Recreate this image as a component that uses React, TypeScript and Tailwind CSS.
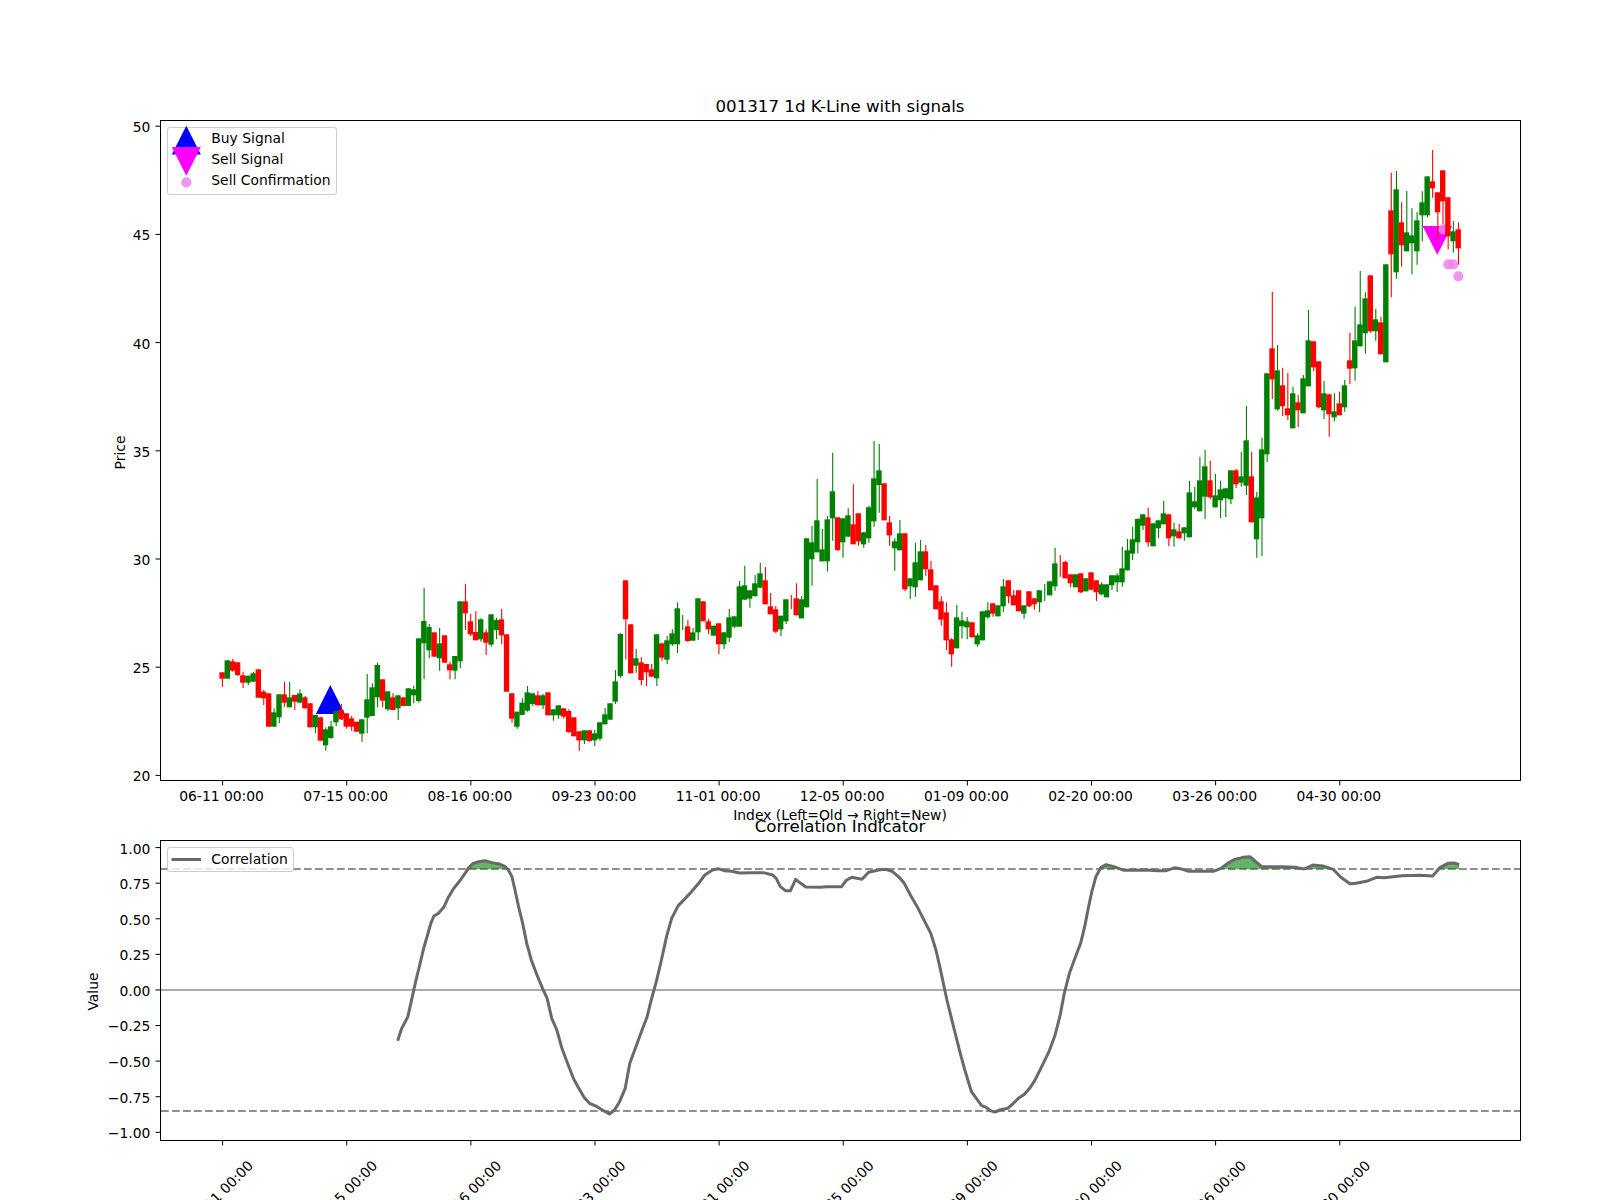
import React from "react";

type Candle = { c: string; t: number; b: number; wt: number; wb: number };

// Each segment: pixel offset of the reading + "colour top bottom wickTop wickBottom" (in thirds of a pixel).
const SEGMENTS: [number, string][] = [
  [620, `R 157 176 157 200,G 121 176 121 176,R 124 152 116 155,R 127 165 127 168,R 166 188 155 204,G 167 188 167 195,G 160 185 155 185,R 148 233 148 233,R 215 235 210 255,R 220 320 220 320,G 277 320 265 320,G 223 292 223 310,R 223 248 185 260,G 232 262 185 262,R 225 245 225 270,G 220 248 208 248,R 232 265 228 265,R 250 322 250 322,G 285 322 285 340,R 292 362 292 362,G 328 376 322 392,G 319 354 303 356,G 273 307 273 318,R 270 298 252 300,R 280 320 280 326,R 295 320 288 333,R 305 335 305 335,G 298 341 298 366,G 238 293 162 340,G 202 288 190 288,G 135 232 128 262,R 178 242 178 262,G 214 268 214 272,R 232 270 220 270,G 226 265 226 300,R 232 258 232 258,G 205 258 205 258,G 208 226 197 250,G 55 243 55 248,G 3 70 -97 178,G 21 91 12 115,R 37 110 37 110,G 70 115 24 152,R 46 128 46 128,R 133 151 125 178,G 108 152 108 178,G -56 124 -56 145,R -56 -20 -108 30,R 4 43 -18 48,R 36 61 -26 61,G -2 58 -5 65,R 37 68 28 105,G -17 74 -17 80,G 0 30 -7 57,R -2 46 -33 72,R 43 215 43 215,R 220 296 220 308,G 275 320 275 326,G 248 285 235 285,G 217 272 198 275`],
  [500, `G 580 612 580 618,R 586 616 573 616,G 586 616 582 627,R 577 646 577 646,G 628 646 628 662,G 616 646 616 656,R 625 650 625 656,R 633 696 628 699,R 652 709 652 709,R 694 721 694 752,G 691 721 691 732,R 691 723 691 725,G 700 721 690 738,G 667 716 667 722,G 643 673 624 673,G 610 659 610 659,G 544 605 510 612,G 402 528 400 534,R 241 358 241 478,R 373 520 373 520,G 475 497 447 518,R 487 540 472 556,R 492 517 492 558,R 508 530 492 530,G 403 535 403 558,R 430 473 430 482,G 421 479 408 492,G 400 433 388 438,G 325 433 307 459,G 378 378 345 390,R 379 423 360 426,G 397 422 384 422,G 295 397 295 420,R 304 364 304 364,R 364 388 356 402,G 377 407 377 407,R 370 433 370 462,G 397 433 397 447,G 352 413 327 426,G 349 380 349 384,G 259 380 243 380,G 256 299 197 299,G 271 296 271 323,G 250 288 225 291,G 220 263 188 263,R 241 313 201 313,R 319 343 279 343,R 328 395 318 399,G 347 388 347 408,G 298 364 298 372,R 306 306 285 327,R 295 346 250 346`],
  [430, `G 508 565 498 565,G 325 532 325 532,G 337 388 288 467,G 271 367 147 367,G 358 394 297 394,G 268 394 258 425,G 184 265 68 332,R 262 360 262 363,G 265 337 265 383,G 256 320 235 320,R 283 343 163 343,R 250 334 250 347,G 307 343 307 353,G 232 325 228 338,G 145 274 33 290,G 121 165 42 248,R 160 271 160 271,R 277 316 258 347,G 334 355 325 422,G 310 361 270 361,R 310 478 310 484,G 445 469 445 508,G 397 472 338 500,G 364 451 330 451,R 364 418 345 437,R 418 481 393 481,R 466 538 466 538,R 514 569 499 587,R 547 631 517 661,R 628 673 625 710,G 562 655 525 655,G 571 589 545 626,G 574 592 561 628,R 577 622 577 622,G 616 643 610 650,G 544 631 544 631,G 541 562 517 566,R 520 551 520 560,G 526 559 526 559,G 469 529 447 547,R 451 499 451 520,R 496 526 480 526,R 481 544 481 544,G 526 551 526 566,R 484 529 484 532,R 505 523 505 539,G 481 517 481 546,G 488 488 462 513,G 454 496 454 496,G 400 469 353 482,R 408 408 375 440,R 396 445 392 445,R 433 460 433 472,G 433 472 433 472,R 430 487 430 490,G 445 484 445 484,R 427 479 427 481,R 451 487 451 513,G 463 493 457 496,G 463 502 463 502,G 436 466 436 480,G 436 457 430 486,G 415 457 350 470,G 361 421 327 421`],
  [270, `G 808 851 770 870,G 747 817 745 850,G 733 767 733 780,R 742 817 713 830,G 760 829 760 829,G 751 775 751 805,G 730 763 692 763,R 733 805 733 828,G 778 799 758 830,R 784 805 762 805,G 772 790 772 812,G 667 802 632 802,G 694 712 650 717,G 631 724 560 724,G 589 680 540 747,R 631 682 572 687,G 676 712 612 712,G 658 691 632 744,G 655 685 655 741,G 601 688 601 702,R 601 643 597 654,G 619 638 545 650,G 511 647 408 675,R 619 757 545 757,G 682 808 666 863,G 538 745 503 858,G 310 553 310 576,R 235 328 66 387,G 301 418 225 422,R 346 409 293 438,R 415 436 309 450,G 370 475 350 475,R 397 421 375 471,G 325 430 315 430,G 211 349 120 349,R 214 292 214 303,R 274 412 274 415,G 370 421 333 447,R 373 433 373 500,G 424 442 370 454,R 400 436 365 436`],
  [130, `G 766 832 750 845,R 691 716 608 762,G 631 715 530 752,G 583 649 423 649,G 505 610 487 671,R 436 604 436 608,G 568 604 537 632,R 577 673 560 673,G 403 697 403 697,R 241 373 128 502,G 178 427 123 446,R 277 346 217 410,G 307 364 183 364,G 316 340 235 433,G 271 364 246 404,G 217 256 184 334,G 139 256 139 262,R 154 175 60 203,R 187 247 187 328,R 121 214 121 283,R 202 319 202 358,G 304 334 273 368,R 298 355 277 404`],
];

const candles: Candle[] = SEGMENTS.flatMap(([off, s]) =>
  s.split(",").map((row) => {
    const [c, t, b, wt, wb] = row.split(" ");
    const y = (v: string) => off + Number(v) / 3;
    return { c: c === "R" ? "#ff0000" : "#008000", t: y(t), b: y(b), wt: y(wt), wb: y(wb) };
  })
);

const X0 = 222;
const STEP = 5.172;
const TICK0 = 222.6;

const priceTicks: [string, number][] = [
  ["50", 126.2],
  ["45", 234.4],
  ["40", 342.6],
  ["35", 450.8],
  ["30", 559],
  ["25", 667.2],
  ["20", 775.4],
];

const valueTicks = ["1.00", "0.75", "0.50", "0.25", "0.00", "\u22120.25", "\u22120.50", "\u22120.75", "\u22121.00"];
const dates = ["06-11", "07-15", "08-16", "09-23", "11-01", "12-05", "01-09", "02-20", "03-26", "04-30"];

const A = `505,842 513,805 525,770 533,715 541,660 549,610 556,565 563,528 570,490 576,468 585,460 596,440 605,410 615,385 628,360 637,340 645,322 653,310 664,305 676,302 690,308 705,312 716,320 722,330 729,350 735,390 742,440 750,490 758,550 767,600 778,645 789,685 798,715 807,775 817,810 827,865 838,910 850,957 860,985 871,1013 881,1030 896,1040 906,1050 920,1062 930,1050 940,1025 951,985 960,910 972,860 984,810 994,770 1002,720 1012,665 1022,600 1032,530 1042,475 1055,437 1067,418 1080,397 1095,370 1107,345 1122,330 1133,326 1145,332 1160,334 1175,339 1200,338 1222,338 1240,345 1247,355 1255,380 1265,392 1275,392 1285,358 1295,370 1305,381 1335,382 1345,380 1375,380 1385,360 1395,352 1415,358 1428,337 1450,329 1462,328 1475,335 1488,352 1498,370 1510,405 1525,445 1540,490 1550,520 1560,570`;
const B = `274,620 281,670 288,720 296,770 305,825 315,885 323,930 336,995 347,1018 356,1037 365,1042 373,1052 382,1056 392,1050 407,1045 417,1032 428,1015 440,1003 450,985 460,962 472,925 488,875 500,825 510,765 518,700 528,640 540,590 550,550 558,500 565,445 572,395 580,350 590,322 600,314 615,320 635,331 680,330 700,332 718,332 735,323 750,328 762,334 810,334 825,325 838,310 852,298 868,292 882,290 895,307 905,320 945,320 970,322 988,327 1005,315 1025,318 1045,328 1060,352 1078,371 1090,370 1110,364 1130,352 1145,353 1180,347 1215,346 1240,348 1255,322 1270,310 1282,309 1292,314`;

const parse = (s: string, ox: number) =>
  s.split(" ").map((p) => {
    const [x, y] = p.split(",").map(Number);
    return [ox + x / 1.96, 760 + y / 3] as [number, number];
  });

const curve = [...parse(A, 140), ...parse(B, 800)];
const curvePts = curve.map((p) => p.join(",")).join(" ");
const first = curve[0];
const last = curve[curve.length - 1];
const areaUp = `${curvePts} ${last[0]},869 ${first[0]},869`;
const areaDown = `${curvePts} ${last[0]},1111 ${first[0]},1111`;

function Frame({ x1, y1, x2, y2 }: { x1: number; y1: number; x2: number; y2: number }) {
  return <rect x={x1} y={y1} width={x2 - x1} height={y2 - y1} fill="none" stroke="#000" strokeWidth={1} shapeRendering="crispEdges" />;
}

export default function App() {
  return (
    <div className="w-[1600px] h-[1200px] bg-white overflow-hidden text-black [font-family:'DejaVu_Sans',sans-serif]">
      <div className="h-[120px] pl-[160px] w-[1520px] flex items-end justify-center pb-[1.4px] text-[16.67px]">001317 1d K-Line with signals</div>

      <div className="relative ml-[160px] w-[1360px] h-[660px]">
        <svg className="block overflow-visible text-[13.89px]" width={1360} height={660} viewBox="160 120 1360 660">
          {/* signal markers sit under the candles */}
          <polygon points="330.3,685 344.8,714 315.8,714" fill="#0000ff" />
          <polygon points="1422.6,226 1452,226 1437.3,254.7" fill="#ff00ff" />
          {[
            [1443.3, 229.3],
            [1448.3, 264.3],
            [1453.2, 264.3],
            [1458.3, 276.3],
          ].map(([cx, cy]) => (
            <circle key={cx} cx={cx} cy={cy} r={5.1} fill="#ee82ee" fillOpacity={0.85} />
          ))}
          {candles.map((k, i) => {
            const x = X0 + i * STEP;
            return (
              <g key={i} fill={k.c} stroke="none">
                <line x1={x + 0.4} x2={x + 0.4} y1={k.wt} y2={k.wb} stroke={k.c} strokeWidth={1.1} />
                {k.b > k.t && <rect x={x - 2.6} y={k.t} width={5.4} height={k.b - k.t} />}
              </g>
            );
          })}
          <Frame x1={160.5} y1={120.5} x2={1520.5} y2={780.5} />
          {priceTicks.map(([label, y]) => (
            <g key={label}>
              <line x1={155.5} x2={160} y1={y} y2={y} stroke="#000" strokeWidth={1} />
              <text x={150.3} y={y + 0.9} textAnchor="end" dominantBaseline="central" fill="#000">
                {label}
              </text>
            </g>
          ))}
          {dates.map((d, i) => {
            const x = TICK0 + i * 24 * STEP;
            return (
              <g key={d}>
                <line x1={x} x2={x} y1={781} y2={785.5} stroke="#000" strokeWidth={1} />
                <text x={x - 1} y={801} textAnchor="middle" fill="#000">
                  {d} 00:00
                </text>
              </g>
            );
          })}
          <text x={840} y={820} textAnchor="middle" fill="#000">
            Index (Left=Old → Right=New)
          </text>
          <text x={0} y={0} transform="translate(125 452.5) rotate(-90)" textAnchor="middle" fill="#000">
            Price
          </text>
        </svg>

        <div className="absolute left-[7.3px] top-[7.3px] w-[170px] h-[68px] bg-white/80 border border-[#cccccc] rounded-[3px] pl-[43px] text-[13.89px]">
          <svg className="absolute left-0 top-0 overflow-visible" width={40} height={60}>
            <polygon points="18.3,-2.3 32.8,26.4 3.8,26.4" fill="#0000ff" />
            <polygon points="3.8,19 32.8,19 18.3,47.7" fill="#ff00ff" />
            <circle cx={18.3} cy={54.4} r={5.1} fill="#ee82ee" fillOpacity={0.85} />
          </svg>
          <div className="h-[21px] leading-[21px]">Buy Signal</div>
          <div className="h-[21px] leading-[21px]">Sell Signal</div>
          <div className="h-[21px] leading-[21px]">Sell Confirmation</div>
        </div>
      </div>

      <div className="h-[60px] pl-[160px] w-[1520px] flex items-end justify-center pb-[1.4px] text-[16.67px]">Correlation Indicator</div>

      <div className="relative ml-[160px] w-[1360px] h-[300px]">
        <svg className="block overflow-visible text-[13.89px]" width={1360} height={300} viewBox="160 840 1360 300">
          <defs>
            <clipPath id="above">
              <rect x={160} y={840} width={1360} height={29} />
            </clipPath>
            <clipPath id="below">
              <rect x={160} y={1111} width={1360} height={29} />
            </clipPath>
          </defs>
          <line x1={161} x2={1520} y1={990} y2={990} stroke="#ababab" strokeWidth={2} />
          <line x1={161} x2={1520} y1={869} y2={869} stroke="#8e8e8e" strokeWidth={2.1} strokeDasharray="7.7 3.3" />
          <line x1={161} x2={1520} y1={1111} y2={1111} stroke="#8e8e8e" strokeWidth={2.1} strokeDasharray="7.7 3.3" />
          <polygon points={areaUp} fill="#008000" fillOpacity={0.6} clipPath="url(#above)" />
          <polygon points={areaDown} fill="#ff0000" fillOpacity={0.6} clipPath="url(#below)" />
          <polyline points={curvePts} fill="none" stroke="#696969" strokeWidth={3} strokeLinejoin="round" />
          <Frame x1={160.5} y1={840.5} x2={1520.5} y2={1140.5} />
          {valueTicks.map((label, i) => {
            const y = 847.6 + i * 35.59;
            return (
              <g key={label}>
                <line x1={155.5} x2={160} y1={y} y2={y} stroke="#000" strokeWidth={1} />
                <text x={150.3} y={y + 0.9} textAnchor="end" dominantBaseline="central" fill="#000">
                  {label}
                </text>
              </g>
            );
          })}
          {dates.map((d, i) => {
            const x = TICK0 + i * 24 * STEP;
            return (
              <g key={d}>
                <line x1={x} x2={x} y1={1141} y2={1145.5} stroke="#000" strokeWidth={1} />
                <text x={0} y={0} transform={`translate(${x - 2} 1193) rotate(-45)`} textAnchor="middle" dominantBaseline="central" fill="#000">
                  {d} 00:00
                </text>
              </g>
            );
          })}
          <text x={0} y={0} transform="translate(98 991.5) rotate(-90)" textAnchor="middle" fill="#000">
            Value
          </text>
        </svg>

        <div className="absolute left-[7.3px] top-[7.3px] w-[127px] h-[25px] bg-white/80 border border-[#cccccc] rounded-[3px] pl-[43px] text-[13.89px] leading-[23px]">
          <svg className="absolute left-0 top-0 overflow-visible" width={40} height={24}>
            <line x1={3.5} x2={33} y1={11.5} y2={11.5} stroke="#696969" strokeWidth={3} />
          </svg>
          Correlation
        </div>
      </div>
    </div>
  );
}
